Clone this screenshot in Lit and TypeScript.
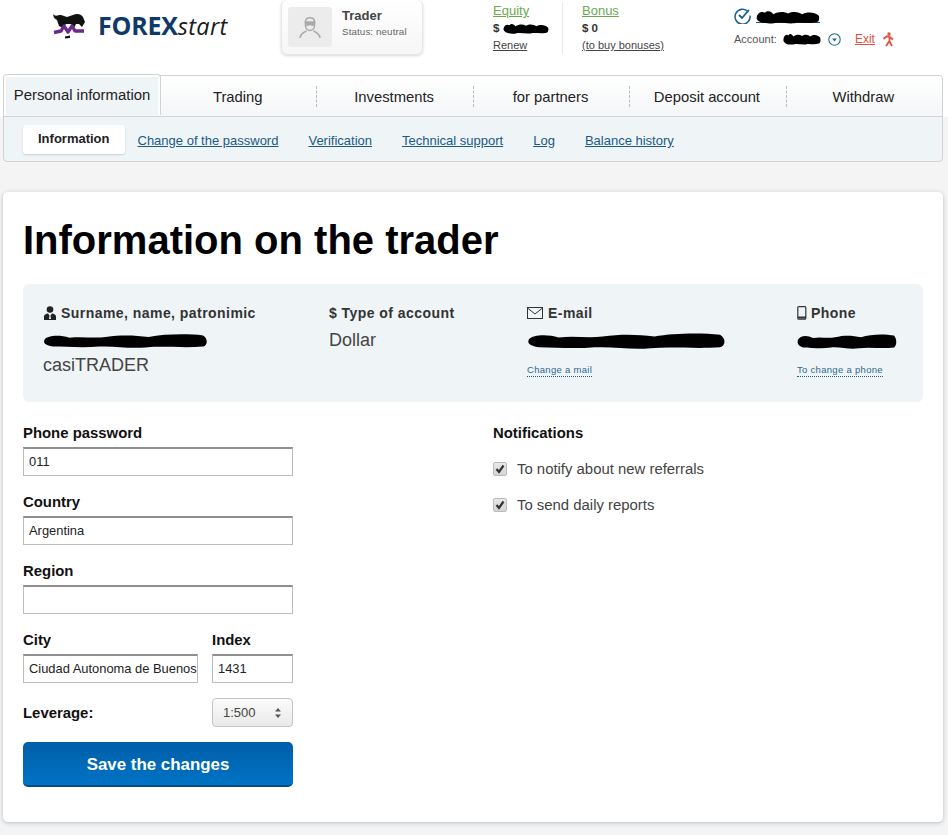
import { LitElement, html, css } from "lit";
import { customElement } from "lit/decorators.js";

const blob = (w: number, h: number) => html`<svg class="blob" width=${w} height=${h} viewBox="0 0 100 20" preserveAspectRatio="none"><path d="M1 8C3 3 10 2 16 6C24 4 30 7 38 5C48 2 56 3 64 5C74 1 88 1 97 3C100 7 100 15 97 17C84 19 74 16 62 18C52 20 44 16 34 17C24 19 14 17 6 17C1 15 0 12 1 8Z" fill="#000"/></svg>`;

const lumps = (w: number, h: number) => html`<svg class="blob" width=${w} height=${h} viewBox="0 0 100 20" preserveAspectRatio="none"><path d="M1 12C1 5 8 1 14 4C18 0 24 2 27 6C35 2 44 2 50 5C58 1 68 3 72 6C80 2 92 3 98 8C100 13 98 18 92 18C80 20 70 17 60 19C48 20 38 17 28 19C18 20 3 19 1 12Z" fill="#000"/></svg>`;

const check = html`<svg width="10" height="10" viewBox="0 0 10 10" fill="none" stroke="#333" stroke-width="2.200"><path d="M1.500 5 4 8l4.500-6.500"/></svg>`;

@customElement("app-root")
export class AppRoot extends LitElement {
  static styles = css`
    :host { display: block; width: 948px; height: 835px; overflow: hidden; background: linear-gradient(#fff 0 117px, #f4f4f4 117px); font-family: "Liberation Sans", Arial, sans-serif; color: #222; }
    a { color: inherit; }
    svg { display: block; flex: none; }
    .blob { display: inline-block; vertical-align: middle; }
    .header { height: 75px; display: flex; align-items: flex-start; }
    .logo { display: flex; align-items: center; width: 228px; margin-left: 53px; padding-top: 8px; gap: 13px; }
    .brand { font-family: "Open Sans", sans-serif; font-size: 25px; line-height: 34px; color: #0f3a68; font-weight: 700; letter-spacing: -0.2px; white-space: nowrap; }
    .brand i { font-size: 23.5px; font-weight: 400; color: #1a1a1a; letter-spacing: 0.3px; }
    .trader { width: 142px; height: 55px; box-sizing: border-box; border: 1px solid #e6e6e6; border-top: 0; box-shadow: 0 1px 3px rgba(0,0,0,.16); background: linear-gradient(#fff, #f6f6f6); display: flex; padding: 7px 6px; gap: 10px; border-radius: 6px; }
    .avatar { width: 44px; height: 40px; background: #ececec; border-radius: 3px; display: flex; align-items: center; justify-content: center; }
    .trader b { display: block; font-size: 13px; line-height: 16px; color: #444; margin-top: 1px; }
    .trader span { display: block; font-size: 9.8px; line-height: 14px; color: #666; margin-top: 1px; letter-spacing: .1px; }
    .funds { margin-left: 70px; display: flex; padding-top: 3px; width: 241px; }
    .fund { font-size: 11px; line-height: 17px; }
    .fund.eq { width: 69px; border-right: 1px solid #e9e9e9; height: 51px; }
    .fund.bo { padding-left: 19px; }
    .fund .top { display: block; font-size: 13px; color: #6aa84f; text-decoration: underline; line-height: 16px; }
    .fund b { display: block; color: #333; font-size: 11.5px; line-height: 18px; white-space: nowrap; }
    .fund .low { display: block; color: #444; font-size: 11px; text-decoration: underline; line-height: 17px; }
    .acct { padding-top: 6px; }
    .acct .r1 { display: flex; align-items: center; gap: 5px; height: 18px; }
    .acct .line { display: block; border-bottom: 1px solid #1d5c8c; height: 15px; }
    .acct .r2 { display: flex; align-items: center; margin-top: 6px; height: 18px; font-size: 11px; color: #555; }
    .exit { color: #e0503c; font-size: 12px; text-decoration: underline; margin-left: 14px; margin-right: 7px; }

    .nav { margin: 0 5px 0 3px; border: 1px solid #d2d2d2; border-radius: 4px; background: #eff4f7; }
    .tabs { display: flex; height: 41px; box-sizing: border-box; background: linear-gradient(#fff, #f4f6f7); border-bottom: 1px solid #d4d4d4; border-radius: 4px 4px 0 0; }
    .tab-active { width: 158px; height: 41px; box-sizing: border-box; margin: -2px 0 -1px -1px; border: 1px solid #d2d2d2; border-bottom: 0; border-radius: 4px 4px 0 0; background: #fff; padding: 2px 2px 1px; flex: none; }
    .tab-active span { display: flex; align-items: center; justify-content: center; background: #eff4f7; height: 38px; font-size: 14.9px; color: #222; padding-bottom: 2px; box-sizing: border-box; }
    .tab { flex: 1; display: flex; align-items: center; justify-content: center; font-size: 14.8px; color: #222; border-right: 1px dashed #bbb; margin: 10px 0 9px; padding-right: 2px; }
    .tab:last-child { border-right: 0; }
    .sub { display: flex; align-items: center; height: 44px; box-sizing: border-box; padding: 2px 0 0 19px; font-size: 13px; color: #1a5a86; }
    .sub .on { background: #fff; color: #222; font-weight: 700; font-size: 13px; padding: 0 15px; height: 29px; line-height: 28px; border-radius: 3px; box-shadow: 0 1px 2px rgba(0,0,0,.15); margin-right: 13px; margin-top: -1px; }
    .sub a { margin-right: 30px; margin-top: 1px; }

    .card { margin: 30px 5px 0 3px; height: 630px; box-sizing: border-box; background: #fff; border-radius: 5px; box-shadow: 0 1px 4px rgba(90,110,130,.4); padding: 0 20px; }
    h1 { margin: 0; font-size: 40px; line-height: 46px; padding-top: 25px; height: 92px; box-sizing: border-box; color: #000; font-weight: 700; }
    .info { height: 118px; background: #eff4f7; border-radius: 6px; display: flex; padding: 20px 0 0 20px; box-sizing: border-box; }
    .col { flex: none; }
    .col.a { width: 286px; } .col.b { width: 198px; } .col.c { width: 270px; }
    .lbl { display: flex; align-items: center; gap: 4px; font-size: 14px; font-weight: 700; color: #333; line-height: 18px; letter-spacing: .45px; white-space: nowrap; }
    .val { font-size: 18px; line-height: 26px; color: #444; margin-top: 5px; height: 25px; }
    .val + .val { margin-top: 0; }
    .mini { display: inline-block; font-size: 9.5px; color: #2c6a8e; border-bottom: 1px dotted #1a5a86; line-height: 13px; margin-top: 11px; letter-spacing: .3px; }

    .form { display: flex; margin-top: 21px; }
    .left { width: 270px; margin-right: 200px; flex: none; }
    .field { margin-bottom: 16px; }
    .field label, .fl { display: block; font-size: 14.9px; font-weight: 700; color: #111; line-height: 20px; margin-bottom: 4px; }
    .inp { width: 100%; height: 29px; box-sizing: border-box; border: 1px solid #bdbdbd; border-top: 2px solid #8f8f8f; padding: 0 0 1px 5px; font: 12.9px "Liberation Sans", Arial, sans-serif; color: #222; background: #fff; outline: 0; border-radius: 0; }
    .split { display: flex; gap: 14px; }
    .split .f1 { width: 175px; } .split .f2 { width: 81px; }
    .lev { display: flex; align-items: center; justify-content: space-between; margin-bottom: 15px; margin-top: 15px; }
    .lev .fl { margin: 0; }
    .sel { width: 81px; height: 29px; box-sizing: border-box; border: 1px solid #c4c4c4; border-radius: 4px; background: linear-gradient(#fbfbfb, #e9e9e9); display: flex; align-items: center; justify-content: space-between; padding: 0 11px 0 10px; font-size: 13px; color: #444; }
    .btn { width: 270px; height: 45px; border: 0; border-bottom: 2px solid #004c88; border-radius: 5px; background: linear-gradient(#005ea9, #0073c4); color: #fff; font: 700 16.9px "Liberation Sans", Arial, sans-serif; display: block; padding: 2px 0 0; }
    .right .fl { margin-bottom: 0; }
    .chk { display: flex; align-items: center; gap: 10px; font-size: 14.9px; color: #444; height: 18px; margin-top: 18px; }
    .chk.first { margin-top: 17px; }
    .box { width: 14px; height: 14px; box-sizing: border-box; border: 1px solid #bbb; border-radius: 2px; background: linear-gradient(#e8e8e8, #d4d4d4); display: flex; align-items: center; justify-content: center; }
  `;

  render() {
    return html`
      <div class="header">
        <div class="logo">
          <svg width="32" height="26" viewBox="0 0 32 26">
            <path d="M0 1C2 4 5 2 8 2L14 4L20 2C24 0 28 1 30 4L32 9L29 14L26 11L23 11L21 15L18 11L13 11L10 15L6 13L4 7L1 5Z" fill="#111"/>
            <path d="M1 19.500 8 18 11 13 15 19 19 13 22 18 31 18" fill="none" stroke="#6b2a8c" stroke-width="3.400" stroke-linejoin="round"/>
            <path d="M12 23.500 17 22.500 17 25 12 25.500Z" fill="#111"/>
          </svg>
          <div class="brand">FOREX<i>start</i></div>
        </div>
        <div class="trader">
          <div class="avatar">
            <svg width="22" height="24" viewBox="0 0 22 24" fill="none" stroke="#aaa" stroke-width="1.500"><path d="M6.500 6C7 1.500 15 1.500 15.500 6V11C15 14.500 12.500 15.500 11 15.500C9.500 15.500 7 14.500 6.500 11Z"/><path d="M6.500 7H15.500V9C14 11 12 10 11 9C10 10 8 11 6.500 9Z" fill="#aaa"/><path d="M1 23C1.500 19 4 17.500 7.500 16M21 23C20.500 19 18 17.500 14.500 16"/></svg>
          </div>
          <div><b>Trader</b><span>Status: neutral</span></div>
        </div>
        <div class="funds">
          <div class="fund eq">
            <a class="top">Equity</a>
            <b>$ ${lumps(46, 11)}</b>
            <a class="low">Renew</a>
          </div>
          <div class="fund bo">
            <a class="top">Bonus</a>
            <b>$ 0</b>
            <a class="low">(to buy bonuses)</a>
          </div>
        </div>
        <div class="acct">
          <div class="r1">
            <svg width="17" height="17" viewBox="0 0 17 17" fill="none" stroke="#1d5c8c" stroke-width="1.500"><path d="M14 4.500A7.500 7.500 0 1 0 16 8.500"/><path d="M5 8l3 3 7-8" stroke-width="1.800"/></svg>
            <span class="line">${lumps(64, 14)}</span>
          </div>
          <div class="r2">
            Account:&nbsp;&nbsp;${lumps(38, 12)}
            <svg style="margin-left:7px" width="13" height="13" viewBox="0 0 13 13" fill="none"><circle cx="6.500" cy="6.500" r="5.700" stroke="#1d6a96" stroke-width="1.100"/><path d="M4 5.500h5L6.500 8.500Z" fill="#1d6a96"/></svg>
            <a class="exit">Exit</a>
            <svg width="12" height="15" viewBox="0 0 12 15" fill="none" stroke="#e0503c" stroke-width="1.800"><circle cx="7" cy="2" r="1.700" fill="#e0503c" stroke="none"/><path d="M1.500 7L4.500 4.500H7.500V9.500L10 14M7 9.500L4 14M7.500 5L11 7.500"/></svg>
          </div>
        </div>
      </div>

      <div class="nav">
        <div class="tabs">
          <div class="tab-active"><span>Personal information</span></div>
          <div class="tab">Trading</div>
          <div class="tab">Investments</div>
          <div class="tab">for partners</div>
          <div class="tab">Deposit account</div>
          <div class="tab">Withdraw</div>
        </div>
        <div class="sub">
          <div class="on">Information</div>
          <a href="#">Change of the password</a>
          <a href="#">Verification</a>
          <a href="#">Technical support</a>
          <a href="#">Log</a>
          <a href="#">Balance history</a>
        </div>
      </div>

      <div class="card">
        <h1>Information on the trader</h1>
        <div class="info">
          <div class="col a">
            <div class="lbl"><svg width="14" height="14" viewBox="0 0 14 14" fill="#222"><circle cx="7" cy="3.500" r="3.300"/><path d="M1 14v-3.500C1 8.500 3 7.600 5 7.400L6.500 9.500 6 13h2L7.500 9.500 9 7.400c2 .2 4 1.100 4 3.100V14Z"/></svg>Surname, name, patronimic</div>
            <div class="val">${blob(165, 16)}</div>
            <div class="val">casiTRADER</div>
          </div>
          <div class="col b">
            <div class="lbl">$ Type of account</div>
            <div class="val">Dollar</div>
          </div>
          <div class="col c">
            <div class="lbl"><svg width="17" height="13" viewBox="0 0 17 13" fill="none" stroke="#333" stroke-width="1"><rect x=".5" y=".5" width="15" height="11"/><path d="M.5 1l7.500 6 7.500-6"/></svg>E-mail</div>
            <div class="val">${blob(199, 18)}</div>
            <a class="mini">Change a mail</a>
          </div>
          <div class="col d">
            <div class="lbl"><svg width="10" height="14" viewBox="0 0 10 14" fill="none" stroke="#333" stroke-width="1.200"><rect x=".8" y=".6" width="8" height="12.600" rx="1"/><path d="M1 11.500h8" stroke-width="2"/></svg>Phone</div>
            <div class="val">${blob(100, 17)}</div>
            <a class="mini">To change a phone</a>
          </div>
        </div>

        <div class="form">
          <div class="left">
            <div class="field"><label>Phone password</label><input class="inp" value="011" /></div>
            <div class="field"><label>Country</label><input class="inp" value="Argentina" /></div>
            <div class="field"><label>Region</label><input class="inp" value="" /></div>
            <div class="split">
              <div class="f1"><label class="fl">City</label><input class="inp" value="Ciudad Autonoma de Buenos Aires" /></div>
              <div class="f2"><label class="fl">Index</label><input class="inp" value="1431" /></div>
            </div>
            <div class="lev">
              <div class="fl">Leverage:</div>
              <div class="sel">1:500<svg width="6" height="10" viewBox="0 0 6 10" fill="#555"><path d="M3 0 6 3.500H0ZM3 10 0 6.500h6Z"/></svg></div>
            </div>
            <button class="btn">Save the changes</button>
          </div>
          <div class="right">
            <div class="fl">Notifications</div>
            <div class="chk first"><span class="box">${check}</span>To notify about new referrals</div>
            <div class="chk"><span class="box">${check}</span>To send daily reports</div>
          </div>
        </div>
      </div>
    `;
  }
}
